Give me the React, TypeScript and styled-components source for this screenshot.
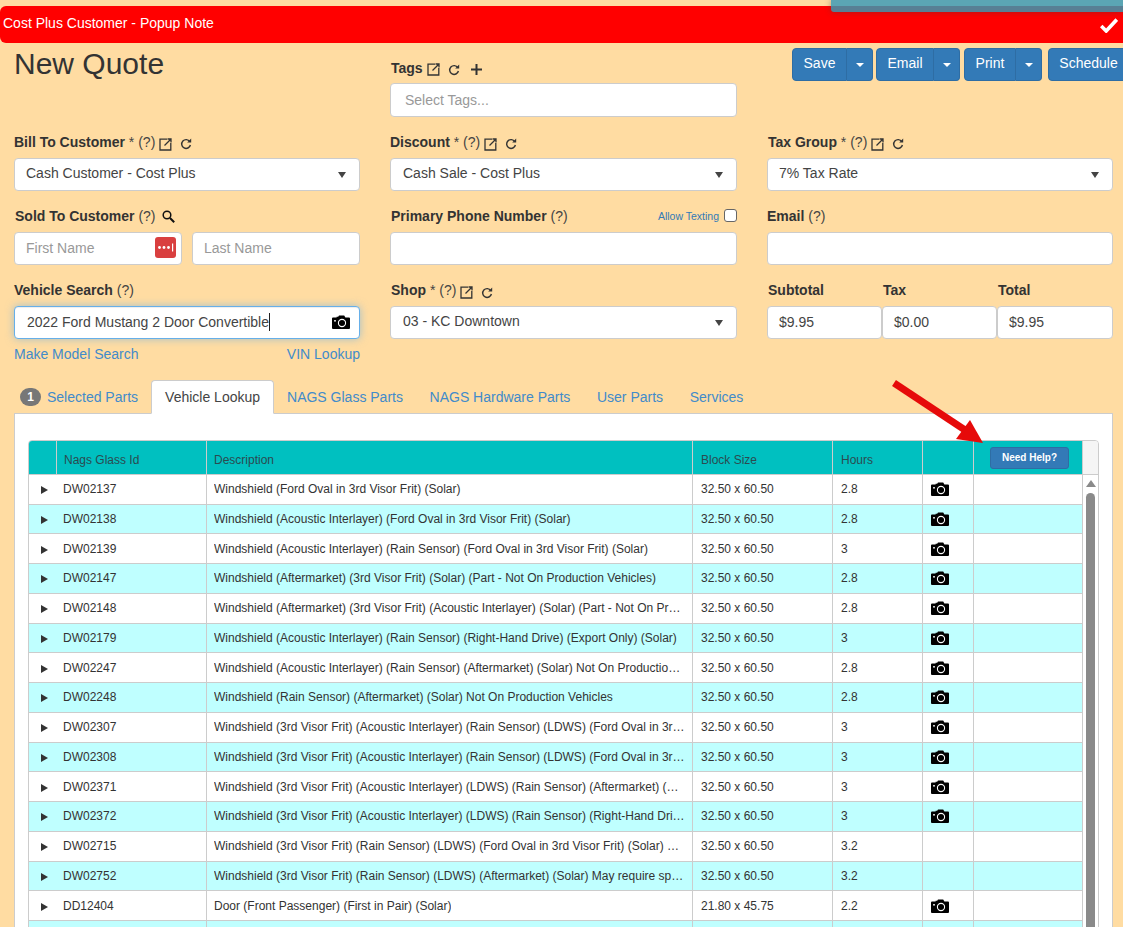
import React from 'react';
import styled, { createGlobalStyle } from 'styled-components';

const GlobalStyle = createGlobalStyle`
  html, body {
    margin: 0;
    padding: 0;
    background: #ffdca2;
    overflow: hidden;
  }
  * {
    box-sizing: border-box;
  }
`;

const Page = styled.div`
  position: relative;
  height: 927px;
  overflow: hidden;
  padding-top: 6px;
  background: #ffdca2;
  color: #333;
  font-family: 'Liberation Sans', Arial, sans-serif;
  font-size: 14px;
`;

const TopStrip = styled.div`
  position: absolute;
  top: 0;
  right: 0;
  width: 292px;
  height: 12px;
  background: #5ba5b4;
  border-bottom: 6px solid #587f94;
  border-bottom-left-radius: 3px;
  box-shadow: 0 0 6px rgba(60, 60, 60, 0.45);
`;

const Banner = styled.div`
  display: flex;
  align-items: center;
  justify-content: space-between;
  height: 37px;
  padding: 0 5px 3px 3px;
  background: #ff0000;
  color: #fff;
  border-radius: 6px 0 0 6px;

  svg {
    margin-top: 4px;
  }
`;

const Content = styled.div`
  padding: 4px 10px 0 14px;
`;

const FormGrid = styled.div`
  display: grid;
  grid-template-columns: 346px 347px 346px;
  column-gap: 30px;
  row-gap: 16px;
  width: 1099px;
`;

const Title = styled.h1`
  margin: 0;
  font-size: 30px;
  font-weight: 400;
  line-height: 33px;
  color: #333;
`;

const Actions = styled.div`
  display: flex;
  align-items: flex-start;
  margin: 1px 0 0 25px;
  white-space: nowrap;
`;

const ButtonGroup = styled.div`
  display: flex;
  flex: none;
  margin-right: ${(p: { $gap: number }) => p.$gap}px;
`;

const Button = styled.div`
  display: flex;
  flex: none;
  align-items: center;
  justify-content: center;
  width: ${(p: { $width: number }) => p.$width}px;
  height: 33px;
  padding-bottom: 3px;
  background: #337ab7;
  border: 1px solid #2e6da4;
  border-radius: 4px 0 0 4px;
  color: #fff;
  line-height: 20px;
`;

const SoloButton = styled(Button)`
  border-radius: 4px;
`;

const CaretButton = styled.div`
  display: flex;
  align-items: center;
  justify-content: center;
  width: 26px;
  height: 33px;
  background: #337ab7;
  border: 1px solid #2e6da4;
  border-left-width: 0;
  border-radius: 0 4px 4px 0;

  &::after {
    content: '';
    border-top: 4px solid #fff;
    border-left: 4px solid transparent;
    border-right: 4px solid transparent;
  }
`;

const Field = styled.div`
  display: flex;
  flex-direction: column;
  padding-top: ${(p: { $top?: number }) => p.$top ?? 0}px;
`;

const LabelRow = styled.div`
  display: flex;
  align-items: flex-start;
  justify-content: space-between;
  height: 25px;
`;

const Label = styled.div`
  display: flex;
  align-items: center;
  height: ${(p: { $tall?: boolean }) => (p.$tall ? 20 : 18)}px;
  color: #333;
  white-space: pre;
`;

const Strong = styled.b`
  font-weight: 700;
  margin-left: ${(p: { $shift?: number }) => p.$shift ?? 0}px;
`;

const Hint = styled.span`
  color: #444;
`;

const IconSlot = styled.span<{ $left?: number; $drop?: number }>`
  display: inline-flex;
  align-items: center;
  margin-left: ${(p) => p.$left ?? 8}px;
  margin-top: ${(p) => p.$drop ?? 5}px;
  color: #333;
`;

const AllowTexting = styled.div`
  display: flex;
  align-items: center;
  gap: 5px;
  height: 18px;
  color: #337ab7;
  font-size: 10.5px;
`;

const Check = styled.span`
  width: 13px;
  height: 13px;
  background: #fff;
  border: 1px solid #666;
  border-radius: 3px;
`;

const Box = styled.div<{ $left?: number; $bottom?: number }>`
  display: flex;
  align-items: center;
  justify-content: space-between;
  height: 33.3px;
  padding: 0 12px ${(p) => p.$bottom ?? 2}px ${(p) => p.$left ?? 11}px;
  background: #fff;
  border: 1px solid #ccc;
  border-radius: 4px;
  color: #444;
`;

const Placeholder = styled.span`
  color: #999;
  margin-left: ${(p: { $indent?: number }) => p.$indent ?? 0}px;
`;

const SelectCaret = styled.span`
  margin: 4px 1px 0 0;
  border-top: 6px solid #444;
  border-left: 4px solid transparent;
  border-right: 4px solid transparent;
`;

const FocusBox = styled(Box)`
  justify-content: flex-start;
  border-color: #66afe9;
  box-shadow: inset 0 1px 1px rgba(0, 0, 0, 0.075), 0 0 8px rgba(102, 175, 233, 0.6);
  padding-right: 9px;
`;

const TextCursor = styled.span`
  width: 1px;
  height: 18px;
  margin-right: auto;
  background: #222;
`;

const Pair = styled.div`
  display: grid;
  grid-template-columns: 168px 168px;
  column-gap: 10px;
`;

const NameBox = styled(Box)`
  padding-right: 5px;
`;

const Totals = styled.div`
  display: grid;
  grid-template-columns: 115px 115px 116px;
`;

const TotalLabel = styled(Strong)`
  display: block;
  height: 25px;
  line-height: 18px;
  padding-left: 1px;
`;

const Links = styled.div`
  display: flex;
  justify-content: space-between;
  margin-top: 4.5px;
  line-height: 20px;
`;

const TextLink = styled.a`
  color: #428bca;
`;

const Tabs = styled.div`
  position: relative;
  z-index: 1;
  display: flex;
  height: 34px;
  margin-top: 16px;
  margin-bottom: -1px;
`;

const Tab = styled.div<{ $active?: boolean }>`
  display: flex;
  align-items: center;
  gap: 6px;
  height: 34px;
  padding: 0 ${(p) => (p.$active ? 13 : 12)}px;
  margin-right: ${(p) => (p.$active ? 0 : 0.6)}px;
  color: ${(p) => (p.$active ? '#444' : '#428bca')};
  background: ${(p) => (p.$active ? '#fff' : 'transparent')};
  border: 1px solid ${(p) => (p.$active ? '#ccc' : 'transparent')};
  border-bottom-color: ${(p) => (p.$active ? '#fff' : 'transparent')};
  border-radius: 4px 4px 0 0;
`;

const FirstTab = styled(Tab)`
  padding: 0 12px 0 5px;
  margin-right: 0;
`;

const Badge = styled.span`
  display: inline-flex;
  align-items: center;
  justify-content: center;
  width: 21px;
  height: 18px;
  background: #777;
  border-radius: 10px;
  color: #fff;
  font-size: 12px;
  font-weight: 700;
`;

const Panel = styled.div`
  width: 1099px;
  height: 600px;
  padding: 26px 14px 0 13px;
  background: #fff;
  border: 1px solid #ccc;
`;

const TableFrame = styled.div`
  width: 1071px;
  border: 1px solid #ccc;
  border-radius: 4px 4px 0 0;
  overflow: hidden;
`;

const columns = '28px 150px 486px 140px 90px 51px 109px';

const HeadRow = styled.div`
  display: grid;
  grid-template-columns: ${columns} 15px;
  height: 33.8px;
  font-size: 12px;
`;

const HeadCell = styled.div<{ $center?: boolean; $left?: number }>`
  display: flex;
  align-items: center;
  justify-content: ${(p) => (p.$center ? 'center' : 'flex-start')};
  padding: 5px 7px 0 ${(p) => p.$left ?? 7}px;
  background: #00c0c0;
  border-right: 1px solid #ccc;
  border-bottom: 1px solid #ccc;
  color: #2b4b50;
`;

const HeadEnd = styled.div`
  background: #f5f5f5;
  border-bottom: 1px solid #ccc;
`;

const HelpButton = styled.div`
  display: flex;
  align-items: center;
  justify-content: center;
  width: 79px;
  height: 22px;
  margin: -4px 0 0 3px;
  background: #337ab7;
  border: 1px solid #2e6da4;
  border-radius: 3px;
  color: #fff;
  font-size: 10px;
  font-weight: 700;
`;

const Body = styled.div`
  display: grid;
  grid-template-columns: 1054px 15px;
`;

const Row = styled.div<{ $tint: boolean }>`
  display: grid;
  grid-template-columns: ${columns};
  height: 29.75px;
  background: ${(p) => (p.$tint ? '#bfffff' : '#fff')};
  font-size: 12px;
  color: #333;
`;

const Cell = styled.div`
  display: flex;
  align-items: center;
  min-width: 0;
  padding: 0 7px 0 ${(p: { $left?: number }) => p.$left ?? 7}px;
  border-right: 1px solid #ccc;
  border-bottom: 1px solid #ccc;
`;

const ExpandCell = styled(Cell)`
  justify-content: center;
  padding: 2px 0 0 2px;
  border-right: 0;
`;

const Arrow = styled.span`
  border-left: 7px solid #333;
  border-top: 4px solid transparent;
  border-bottom: 4px solid transparent;
`;

const Ellipsis = styled.span`
  overflow: hidden;
  white-space: nowrap;
  text-overflow: ellipsis;
`;

const CameraCell = styled(Cell)`
  padding: 0 0 0 8px;
`;

const Scroll = styled.div`
  display: flex;
  flex-direction: column;
  align-items: center;
  padding-top: 5px;
  background: #fff;
`;

const ScrollUp = styled.span`
  border-bottom: 7px solid #8a8a8a;
  border-left: 5px solid transparent;
  border-right: 5px solid transparent;
`;

const ScrollThumb = styled.span`
  flex: 1;
  width: 9px;
  margin-top: 6px;
  background: #8a8a8a;
  border-radius: 5px 5px 0 0;
`;

const ArrowOverlay = styled.svg`
  position: absolute;
  left: 885px;
  top: 372px;
`;

const EditIcon = () => (
  <svg width="13" height="13" viewBox="0 0 13 13" fill="none" stroke="currentColor" strokeWidth="1.3">
    <path d="M8 1.2H1v10.8h10.8V5" />
    <path d="M5.5 7.5L11.5 1.5M8.5 1h3.5v3.5" />
  </svg>
);

const RefreshIcon = () => (
  <svg width="12" height="12" viewBox="0 0 12 12" fill="none">
    <path d="M9.8 3.6A4.4 4.4 0 1 0 10.4 7" stroke="currentColor" strokeWidth="1.4" />
    <path d="M7.2 4.4L11.2 4.4L11.2 0.6Z" fill="currentColor" />
  </svg>
);

const PlusIcon = () => (
  <svg width="11" height="11" viewBox="0 0 11 11" stroke="currentColor" strokeWidth="2">
    <path d="M5.5 0v11M0 5.5h11" />
  </svg>
);

const SearchIcon = () => (
  <svg width="13" height="13" viewBox="0 0 13 13" fill="none" stroke="#111" strokeWidth="1.5">
    <circle cx="5" cy="5" r="3.8" />
    <path d="M8 8l4.2 4.2" strokeWidth="2" />
  </svg>
);

const CameraIcon = () => (
  <svg width="18" height="14" viewBox="0 0 18 14">
    <path
      d="M1 2.6h3.6V1.8h1.6L7 .4h5.2l1.2 2.2H17a1 1 0 0 1 1 1V13a1 1 0 0 1-1 1H1a1 1 0 0 1-1-1V3.6a1 1 0 0 1 1-1z"
      fill="#000"
    />
    <circle cx="10" cy="8" r="3.6" fill="none" stroke="#fff" strokeWidth="1.1" />
    <rect x="2.2" y="5" width="1.6" height="1.6" fill="#fff" />
  </svg>
);

const PasswordIcon = () => (
  <svg width="21" height="21" viewBox="0 0 21 21">
    <rect width="21" height="21" rx="3" fill="#d93f3f" />
    <circle cx="4.5" cy="10.5" r="1.4" fill="#fff" />
    <circle cx="9" cy="10.5" r="1.4" fill="#fff" />
    <circle cx="13.5" cy="10.5" r="1.4" fill="#fff" />
    <rect x="17" y="6.5" width="1.2" height="8" fill="#fff" />
  </svg>
);

const CheckIcon = () => (
  <svg width="18" height="15" viewBox="0 0 18 15" fill="none" stroke="#fff" strokeWidth="3.6">
    <path d="M1.2 8l5 5L16.8 1.6" />
  </svg>
);

const rows = [
  ['DW02137', 'Windshield (Ford Oval in 3rd Visor Frit) (Solar)', '32.50 x 60.50', '2.8', true],
  ['DW02138', 'Windshield (Acoustic Interlayer) (Ford Oval in 3rd Visor Frit) (Solar)', '32.50 x 60.50', '2.8', true],
  ['DW02139', 'Windshield (Acoustic Interlayer) (Rain Sensor) (Ford Oval in 3rd Visor Frit) (Solar)', '32.50 x 60.50', '3', true],
  ['DW02147', 'Windshield (Aftermarket) (3rd Visor Frit) (Solar) (Part - Not On Production Vehicles)', '32.50 x 60.50', '2.8', true],
  ['DW02148', 'Windshield (Aftermarket) (3rd Visor Frit) (Acoustic Interlayer) (Solar) (Part - Not On Production Vehicles)', '32.50 x 60.50', '2.8', true],
  ['DW02179', 'Windshield (Acoustic Interlayer) (Rain Sensor) (Right-Hand Drive) (Export Only) (Solar)', '32.50 x 60.50', '3', true],
  ['DW02247', 'Windshield (Acoustic Interlayer) (Rain Sensor) (Aftermarket) (Solar) Not On Production Vehicles', '32.50 x 60.50', '2.8', true],
  ['DW02248', 'Windshield (Rain Sensor) (Aftermarket) (Solar) Not On Production Vehicles', '32.50 x 60.50', '2.8', true],
  ['DW02307', 'Windshield (3rd Visor Frit) (Acoustic Interlayer) (Rain Sensor) (LDWS) (Ford Oval in 3rd Visor Frit) (Solar)', '32.50 x 60.50', '3', true],
  ['DW02308', 'Windshield (3rd Visor Frit) (Acoustic Interlayer) (Rain Sensor) (LDWS) (Ford Oval in 3rd Visor Frit) (Solar)', '32.50 x 60.50', '3', true],
  ['DW02371', 'Windshield (3rd Visor Frit) (Acoustic Interlayer) (LDWS) (Rain Sensor) (Aftermarket) (Solar) Not On Production Vehicles', '32.50 x 60.50', '3', true],
  ['DW02372', 'Windshield (3rd Visor Frit) (Acoustic Interlayer) (LDWS) (Rain Sensor) (Right-Hand Drive) (Solar)', '32.50 x 60.50', '3', true],
  ['DW02715', 'Windshield (3rd Visor Frit) (Rain Sensor) (LDWS) (Ford Oval in 3rd Visor Frit) (Solar) May require special order', '32.50 x 60.50', '3.2', false],
  ['DW02752', 'Windshield (3rd Visor Frit) (Rain Sensor) (LDWS) (Aftermarket) (Solar) May require special order', '32.50 x 60.50', '3.2', false],
  ['DD12404', 'Door (Front Passenger) (First in Pair) (Solar)', '21.80 x 45.75', '2.2', true],
  ['', '', '', '', false],
] as const;

const tabs = ['NAGS Glass Parts', 'NAGS Hardware Parts', 'User Parts', 'Services'];

export default function App() {
  return (
    <Page>
      <GlobalStyle />
      <TopStrip />
      <Banner>
        <span>Cost Plus Customer - Popup Note</span>
        <CheckIcon />
      </Banner>
      <Content>
        <FormGrid>
          <Title>New Quote</Title>
          <Field $top={11.3}>
            <LabelRow>
              <Label $tall>
                <Strong $shift={1}>Tags</Strong>
                <IconSlot $left={4} $drop={3}><EditIcon /></IconSlot>
                <IconSlot $left={8} $drop={3}><RefreshIcon /></IconSlot>
                <IconSlot $left={11} $drop={3}><PlusIcon /></IconSlot>
              </Label>
            </LabelRow>
            <Box $left={12} $bottom={0}><Placeholder $indent={2}>Select Tags...</Placeholder></Box>
          </Field>
          <Actions>
            <ButtonGroup $gap={3}>
              <Button $width={55}>Save</Button>
              <CaretButton />
            </ButtonGroup>
            <ButtonGroup $gap={4}>
              <Button $width={58}>Email</Button>
              <CaretButton />
            </ButtonGroup>
            <ButtonGroup $gap={6}>
              <Button $width={52}>Print</Button>
              <CaretButton />
            </ButtonGroup>
            <SoloButton $width={81}>Schedule</SoloButton>
          </Actions>

          <Field>
            <LabelRow>
              <Label>
                <Strong>Bill To Customer</Strong><Hint> * (?)</Hint>
                <IconSlot $left={4}><EditIcon /></IconSlot>
                <IconSlot><RefreshIcon /></IconSlot>
              </Label>
            </LabelRow>
            <Box>Cash Customer - Cost Plus<SelectCaret /></Box>
          </Field>
          <Field>
            <LabelRow>
              <Label>
                <Strong>Discount</Strong><Hint> * (?)</Hint>
                <IconSlot $left={4}><EditIcon /></IconSlot>
                <IconSlot><RefreshIcon /></IconSlot>
              </Label>
            </LabelRow>
            <Box $left={12}>Cash Sale - Cost Plus<SelectCaret /></Box>
          </Field>
          <Field>
            <LabelRow>
              <Label>
                <Strong $shift={1}>Tax Group</Strong><Hint> * (?)</Hint>
                <IconSlot $left={4}><EditIcon /></IconSlot>
                <IconSlot><RefreshIcon /></IconSlot>
              </Label>
            </LabelRow>
            <Box>7% Tax Rate<SelectCaret /></Box>
          </Field>

          <Field>
            <LabelRow>
              <Label>
                <Strong $shift={1}>Sold To Customer</Strong><Hint> (?)</Hint>
                <IconSlot $left={6} $drop={2}><SearchIcon /></IconSlot>
              </Label>
            </LabelRow>
            <Pair>
              <NameBox>
                <Placeholder>First Name</Placeholder>
                <PasswordIcon />
              </NameBox>
              <Box><Placeholder>Last Name</Placeholder></Box>
            </Pair>
          </Field>
          <Field>
            <LabelRow>
              <Label>
                <Strong $shift={1}>Primary Phone Number</Strong><Hint> (?)</Hint>
              </Label>
              <AllowTexting>
                Allow Texting
                <Check />
              </AllowTexting>
            </LabelRow>
            <Box />
          </Field>
          <Field>
            <LabelRow>
              <Label>
                <Strong>Email</Strong><Hint> (?)</Hint>
              </Label>
            </LabelRow>
            <Box />
          </Field>

          <Field>
            <LabelRow>
              <Label>
                <Strong>Vehicle Search</Strong><Hint> (?)</Hint>
              </Label>
            </LabelRow>
            <FocusBox $left={12}>
              2022 Ford Mustang 2 Door Convertible
              <TextCursor />
              <CameraIcon />
            </FocusBox>
            <Links>
              <TextLink>Make Model Search</TextLink>
              <TextLink>VIN Lookup</TextLink>
            </Links>
          </Field>
          <Field>
            <LabelRow>
              <Label>
                <Strong $shift={1}>Shop</Strong><Hint> * (?)</Hint>
                <IconSlot $left={4}><EditIcon /></IconSlot>
                <IconSlot><RefreshIcon /></IconSlot>
              </Label>
            </LabelRow>
            <Box $left={12} $bottom={4}>03 - KC Downtown<SelectCaret /></Box>
          </Field>
          <Totals>
            <Field>
              <TotalLabel>Subtotal</TotalLabel>
              <Box>$9.95</Box>
            </Field>
            <Field>
              <TotalLabel>Tax</TotalLabel>
              <Box>$0.00</Box>
            </Field>
            <Field>
              <TotalLabel>Total</TotalLabel>
              <Box>$9.95</Box>
            </Field>
          </Totals>
        </FormGrid>

        <Tabs>
          <FirstTab>
            <Badge>1</Badge>
            Selected Parts
          </FirstTab>
          <Tab $active>Vehicle Lookup</Tab>
          {tabs.map((name) => (
            <Tab key={name}>{name}</Tab>
          ))}
        </Tabs>
        <Panel>
          <TableFrame>
            <HeadRow>
              <HeadCell />
              <HeadCell>Nags Glass Id</HeadCell>
              <HeadCell>Description</HeadCell>
              <HeadCell $left={8}>Block Size</HeadCell>
              <HeadCell $left={8}>Hours</HeadCell>
              <HeadCell />
              <HeadCell $center>
                <HelpButton>Need Help?</HelpButton>
              </HeadCell>
              <HeadEnd />
            </HeadRow>
            <Body>
              <div>
                {rows.map((row, i) => (
                  <Row key={i} $tint={i % 2 === 1}>
                    <ExpandCell>{row[0] && <Arrow />}</ExpandCell>
                    <Cell $left={6}>{row[0]}</Cell>
                    <Cell><Ellipsis>{row[1]}</Ellipsis></Cell>
                    <Cell $left={8}>{row[2]}</Cell>
                    <Cell $left={8}>{row[3]}</Cell>
                    <CameraCell>{row[4] && <CameraIcon />}</CameraCell>
                    <Cell />
                  </Row>
                ))}
              </div>
              <Scroll>
                <ScrollUp />
                <ScrollThumb />
              </Scroll>
            </Body>
          </TableFrame>
        </Panel>
      </Content>
      <ArrowOverlay width="105" height="75" viewBox="0 0 105 75">
        <path d="M9 11L80 58" stroke="#e60a0a" strokeWidth="7" fill="none" />
        <path d="M98 71L85 48L71 67Z" fill="#e60a0a" />
      </ArrowOverlay>
    </Page>
  );
}
